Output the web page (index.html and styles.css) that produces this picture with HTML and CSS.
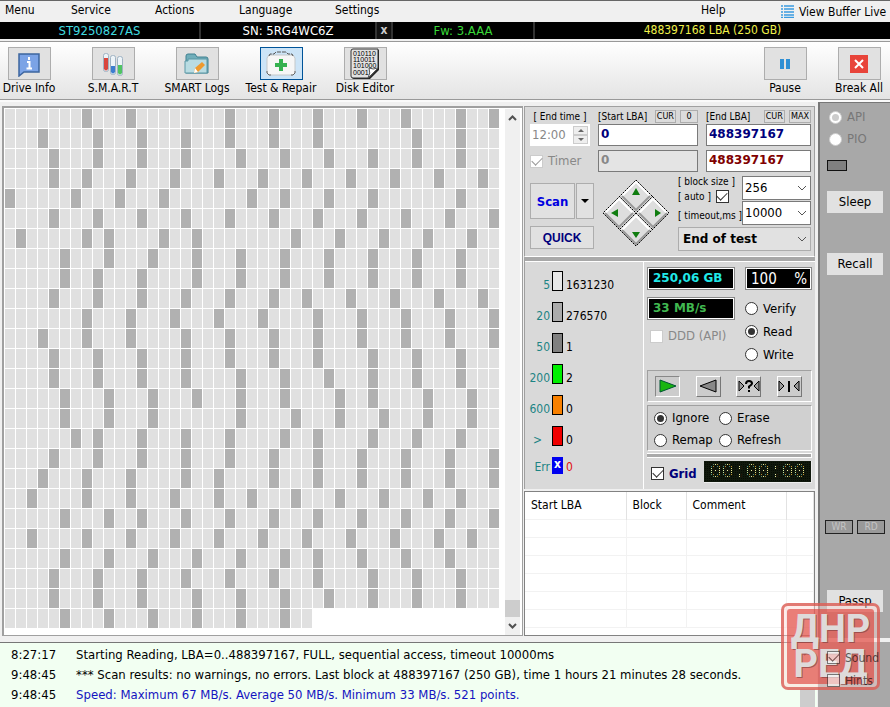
FILE: index.html
```html
<!DOCTYPE html>
<html lang="en">
<head>
<meta charset="utf-8">
<title>Drive test</title>
<link rel="stylesheet" href="styles.css">
</head>
<body>
<nav class="menubar">
  <a href="#">Menu</a><a href="#">Service</a><a href="#">Actions</a><a href="#">Language</a><a href="#">Settings</a><a href="#">Help</a>
  <a href="#" class="buffer"><svg width="13" height="13" viewBox="0 0 13 13"><path d="M0 1h2M3 1h10M0 4h2M3 4h10M0 7h2M3 7h10M0 10h2M3 10h10M0 12.5h2M3 12.5h10" stroke="#3a9be0" stroke-width="1.4"/></svg>View Buffer Live</a>
</nav>
<div class="info">
  <span class="model">ST9250827AS</span>
  <span class="serial">SN: 5RG4WC6Z</span>
  <button class="forget">x</button>
  <span class="firmware">Fw: 3.AAA</span>
  <span class="capacity">488397168 LBA (250 GB)</span>
</div>
<div class="toolbar">
  <div class="tools">
    <button class="tool"><span class="tile"><svg width="24" height="26" viewBox="0 0 24 26"><path d="M2 3h20v18H7l-5 4z" fill="#7ba3e6" stroke="#3d659f" stroke-width="1.5"/><path d="M12 6v3M10 11h2.500v6M9.500 17.500h5.500" stroke="#fff" stroke-width="2" fill="none"/></svg></span>Drive Info</button>
    <button class="tool"><span class="tile"><svg width="24" height="26" viewBox="0 0 24 26"><g stroke="#9fb3c4" fill="#eef4f8"><rect x="2.500" y="2.500" width="5" height="18" rx="2"/><rect x="9.500" y="4.500" width="5" height="19" rx="2"/><rect x="16.500" y="5.500" width="5" height="19" rx="2"/></g><path d="M3 7h4v11q-2 3-4 0z" fill="#d9463d"/><path d="M10 15h4v6q-2 3-4 0z" fill="#3d7dd0"/><path d="M17 14h4v8q-2 3-4 0z" fill="#50c463"/></svg></span>S.M.A.R.T</button>
    <button class="tool"><span class="tile"><svg width="26" height="26" viewBox="0 0 26 26"><path d="M2 22V5q0-2 2-2h7l2 3h9q2 0 2 2v14z" fill="#70aeba" stroke="#3f8090"/><path d="M4 8h19v14H1V10h3z" fill="#b9dce2" stroke="#5b97a5"/><path d="M10 22l1-5 7-6 3 3-7 7z" fill="#ef9a2d"/><path d="M10 22l1-5 3 4z" fill="#fff"/></svg></span>SMART Logs</button>
    <button class="tool active"><span class="tile"><svg width="32" height="28" viewBox="0 0 32 28"><path d="M4 5h24l2 3v15l-2 2H4l-2-2V8z" fill="#f6f6f6" stroke="#c4c8ca"/><path d="M4 6l1-2h4l2-2h10l2 2h4l1 2" fill="none" stroke="#555" stroke-dasharray="4 1"/><path d="M2 21v2l2 2h2M30 21v2l-2 2h-2" fill="none" stroke="#666"/><path d="M14 9h4v4h4v4h-4v4h-4v-4h-4v-4h4z" fill="#35b150"/></svg></span>Test &amp; Repair</button>
    <button class="tool"><span class="tile"><svg width="30" height="32" viewBox="0 0 30 32"><path d="M4 2h25v20l-9 9H4q-2 0-2-2V4q0-2 2-2z" fill="#222"/><path d="M3 1h25v19l-9 10H3q-2 0-2-2V3q0-2 2-2z" fill="#e2e2e2" stroke="#333"/><path d="M18 30q3-5 1-10 4 2 9 0z" fill="#fff" stroke="#555"/><g class="bits"><text x="3" y="8">010110</text><text x="3" y="14">110011</text><text x="3" y="20">101000</text><text x="3" y="27">0001</text></g></svg></span>Disk Editor</button>
  </div>
  <div class="tools right">
    <button class="tool"><span class="tile"><svg width="12" height="12" viewBox="0 0 12 12"><path d="M1 1h4v10H1zM7 1h4v10H7z" fill="#2e8fd4"/></svg></span>Pause</button>
    <button class="tool"><span class="tile"><svg width="18" height="18" viewBox="0 0 18 18"><path fill="#e8443a" d="M0 0h18v18H0z"/><path d="M5 5l8 8M13 5l-8 8" stroke="#fff" stroke-width="2"/></svg></span>Break All</button>
  </div>
</div>

<main class="work">
  <section class="map">
    <div class="cells" id="cells"></div>
    <div class="scroll"><svg width="9" height="6" viewBox="0 0 9 6"><path d="M1 5l3.500-3.500L8 5" fill="none" stroke="#505050" stroke-width="2"/></svg><span class="thumb"></span><svg width="9" height="6" viewBox="0 0 9 6"><path d="M1 1l3.500 3.500L8 1" fill="none" stroke="#505050" stroke-width="2"/></svg></div>
  </section>

  <section class="right-pane">
    <div class="setup">
      <div class="ranges">
        <div class="caption"><label class="end-time" for="time">[ End time ]</label></div>
        <div class="caption"><label for="start">[Start LBA]</label><button class="mini">CUR</button><button class="mini">0</button></div>
        <div class="caption"><label for="end">[End LBA]</label><button class="mini">CUR</button><button class="mini">MAX</button></div>
        <div class="time"><input id="time" value="12:00" disabled><span class="spin"><button aria-label="Later"><i class="up"></i></button><button aria-label="Earlier"><i class="down"></i></button></span></div>
        <input class="lba" id="start" value="0">
        <input class="lba" id="end" value="488397167">
        <label class="choice off"><input type="checkbox" checked disabled>Timer</label>
        <input class="lba" value="0" aria-label="Current start" disabled>
        <input class="lba red" value="488397167" aria-label="Current end">
      </div>
      <div class="actions">
        <div class="start-buttons">
          <button class="scan">Scan</button><button class="scan-menu" aria-label="Scan options"><i class="down"></i></button>
          <button class="quick">QUICK</button>
        </div>
        <svg class="compass" width="68" height="68" viewBox="0 0 68 68">
          <path d="M34 1l33 33-33 33L1 34z" fill="#dedede"/>
          <path d="M20 17L34 3l14 14M3 34l14-14 14 14M37 34l14-14 14 14M20 51l14-14 14 14" fill="none" stroke="#fff" stroke-width="2"/>
          <path d="M20 17l14 14 14-14M3 34l14 14 14-14M37 34l14 14 14-14M20 51l14 14 14-14" fill="none" stroke="#999" stroke-width="2"/>
          <path d="M34 1l33 33-33 33L1 34zM17 17l34 34M51 17L17 51" fill="none" stroke="#000" stroke-dasharray="2 1"/>
          <path d="M34 9l4 7h-8zM34 59l4-6h-8zM9 34l7-4v8zM59 34l-6-4v8z" fill="#107d10"/>
        </svg>
        <div class="options">
          <div class="option-labels">
            <label for="block">[ block size ]</label>
            <label class="auto">[ auto ]<input type="checkbox" checked></label>
            <label for="timeout">[ timeout,ms ]</label>
          </div>
          <div class="option-values">
            <span class="pick"><select id="block"><option>256</option></select><svg width="10" height="6" viewBox="0 0 10 6"><path d="M1 1l4 4 4-4" fill="none" stroke="#555"/></svg></span>
            <span class="pick"><select id="timeout"><option>10000</option></select><svg width="10" height="6" viewBox="0 0 10 6"><path d="M1 1l4 4 4-4" fill="none" stroke="#555"/></svg></span>
          </div>
          <span class="pick finish"><select aria-label="On finish"><option>End of test</option></select><svg width="10" height="6" viewBox="0 0 10 6"><path d="M1 1l4 4 4-4" fill="none" stroke="#555"/></svg></span>
        </div>
      </div>
    </div>

    <div class="stats">
      <div class="legend">
        <span class="ms">5</span><i class="bar b5"></i><span>1631230</span>
        <span class="ms">20</span><i class="bar b20"></i><span>276570</span>
        <span class="ms">50</span><i class="bar b50"></i><span>1</span>
        <span class="ms">200</span><i class="bar b200"></i><span>2</span>
        <span class="ms">600</span><i class="bar b600"></i><span>0</span>
        <span class="ms gt">&gt;</span><i class="bar bmax"></i><span>0</span>
        <span class="ms">Err</span><i class="err">x</i><span class="bad">0</span>
      </div>
      <div class="control">
        <div class="readouts">
          <div class="col">
            <output class="screen cyan">250,06 GB</output>
            <output class="screen green">33 MB/s</output>
            <label class="choice off ddd"><input type="checkbox" disabled>DDD (API)</label>
          </div>
          <div class="col modes">
            <output class="screen percent"><span>100</span><span>%</span></output>
            <label class="choice"><input type="radio" name="mode">Verify</label>
            <label class="choice"><input type="radio" name="mode" checked>Read</label>
            <label class="choice"><input type="radio" name="mode">Write</label>
          </div>
        </div>
        <div class="group playback">
          <button class="pressed" aria-label="Forward"><svg width="20" height="16" viewBox="0 0 20 16"><path d="M2 2l16 6-16 6z" fill="#18b510" stroke="#053"/></svg></button>
          <button aria-label="Backward"><svg width="20" height="16" viewBox="0 0 20 16"><path d="M18 2L2 8l16 6z" fill="#888" stroke="#000"/></svg></button>
          <button aria-label="Random"><svg width="24" height="16" viewBox="0 0 24 16"><path d="M2 3l5 5-5 5zM22 3l-5 5 5 5z" fill="#999" stroke="#000"/><path d="M9 6q0-3 3-3t3 2.500q0 1-3 3v2M12 12v2" fill="none" stroke="#000" stroke-width="2"/></svg></button>
          <button aria-label="Butterfly"><svg width="24" height="16" viewBox="0 0 24 16"><path d="M2 3l5 5-5 5zM22 3l-5 5 5 5z" fill="#999" stroke="#000"/><path d="M12 3v11" stroke="#000" stroke-width="2"/></svg></button>
        </div>
        <div class="group policy">
          <label class="choice"><input type="radio" name="policy" checked>Ignore</label>
          <label class="choice"><input type="radio" name="policy">Erase</label>
          <label class="choice"><input type="radio" name="policy">Remap</label>
          <label class="choice"><input type="radio" name="policy">Refresh</label>
        </div>
        <div class="divider"></div>
        <div class="grid-row">
          <label class="choice grid-toggle"><input type="checkbox" checked>Grid</label>
          <output class="clock">00:00:00</output>
        </div>
      </div>
    </div>

    <div class="defects">
      <table>
        <thead><tr><th class="c1">Start LBA</th><th class="c2">Block</th><th class="c3">Comment</th><th></th></tr></thead>
        <tbody>
          <tr><td></td><td></td><td></td><td></td></tr><tr><td></td><td></td><td></td><td></td></tr>
          <tr><td></td><td></td><td></td><td></td></tr><tr><td></td><td></td><td></td><td></td></tr>
          <tr><td></td><td></td><td></td><td></td></tr><tr><td></td><td></td><td></td><td></td></tr>
        </tbody>
      </table>
    </div>
  </section>

  <aside class="side">
    <label class="choice off"><input type="radio" name="bus" checked disabled>API</label>
    <label class="choice off"><input type="radio" name="bus" disabled>PIO</label>
    <span class="led"></span>
    <button class="sleep">Sleep</button>
    <button class="recall">Recall</button>
    <div class="lamps"><span>WR</span><span>RD</span></div>
    <button class="passp">Passp</button>
  </aside>
</main>

<footer class="bottom">
  <div class="log">
    <table>
      <tr><td>8:27:17</td><td>Starting Reading, LBA=0..488397167, FULL, sequential access, timeout 10000ms</td></tr>
      <tr><td>9:48:45</td><td>*** Scan results: no warnings, no errors. Last block at 488397167 (250 GB), time 1 hours 21 minutes 28 seconds.</td></tr>
      <tr class="speed"><td>9:48:45</td><td>Speed: Maximum 67 MB/s. Average 50 MB/s. Minimum 33 MB/s. 521 points.</td></tr>
    </table>
    <div class="log-scroll"><svg width="9" height="6" viewBox="0 0 9 6"><path d="M1 5l3.500-3.500L8 5" fill="none" stroke="#555" stroke-width="2"/></svg><span></span></div>
  </div>
  <div class="switches">
    <label class="choice"><input type="checkbox" checked>Sound</label>
    <label class="choice"><input type="checkbox">Hints</label>
  </div>
</footer>
<div class="stamp"><div><span>ДНР</span><span>РЕД</span></div></div>
<script src="map.js"></script>
</body>
</html>
```
FILE: styles.css
```css
* { box-sizing: border-box; }
body {
  margin: 0;
  min-height: 100vh;
  display: flex;
  flex-direction: column;
  position: relative;
  background: #f0f0f0;
  color: #000;
  font: 12px/16px "DejaVu Sans Condensed", "DejaVu Sans", sans-serif;
}
button, input, select { font: inherit; color: inherit; margin: 0; padding: 0; border-radius: 0; }
button { border: 1px solid #adadad; background: #e1e1e1; text-align: center; }
a { color: inherit; text-decoration: none; }
svg { display: block; flex: none; }

.menubar {
  display: grid;
  grid-template-columns: 66px 84px 84px 96px 1fr 80px 109px;
  height: 22px;
  padding-left: 5px;
  border-top: 1px solid #666;
  line-height: 18px;
}
.buffer { display: flex; gap: 5px; align-items: center; white-space: nowrap; }

.info {
  display: grid;
  grid-template-columns: 201px 176px 16px 142px 1fr;
  height: 17px;
  background: #000;
  font-size: 12px;
  line-height: 17px;
  text-align: center;
}
.info span { border-right: 2px solid #333; }
.info .capacity { border: 0; color: #f0f04a; }
.info .serial { color: #fff; }
.info .model { color: #40dce0; }
.firmware { color: #38d838; }
.info .model, .info .serial, .firmware { font-size: 13px; }
.forget { background: #111; border: 0; border-right: 2px solid #333; color: #ccc; font-weight: bold; line-height: 15px; }

.toolbar {
  display: flex;
  justify-content: space-between;
  height: 59px;
  margin-top: 2px;
  padding-top: 5px;
  border-top: 1px solid #999;
  border-bottom: 1px solid #999;
  background: linear-gradient(#fff, #e4e4e4);
  overflow: hidden;
}
.tools { display: grid; grid-auto-flow: column; grid-auto-columns: 84px; margin-left: -13px; align-items: start; }
.tools.right { grid-auto-columns: 74px; margin-right: -6px; }
.tool { display: flex; flex-direction: column; align-items: center; border: 0; background: none; white-space: nowrap; }
.tile { display: flex; align-items: center; justify-content: center; width: 43px; height: 33px; border: 1px solid #adadad; background: #e1e1e1; }
.active .tile { background: #cce4f7; border-color: #005499; }
.bits { font: 7px "Liberation Sans", sans-serif; }

.work { flex: 1; display: flex; border-top: 2px solid #fafafa; }
.map {
  flex: 1;
  display: flex;
  justify-content: space-between;
  margin: 4px 0 2px 2px;
  padding: 1px 2px 0 1px;
  background: #fff;
  border: 2px solid #a0a0a0;
  border-width: 2px 1px 1px 2px;
}
.cells { display: grid; grid-template-columns: repeat(45, 10px); grid-auto-rows: 19px; gap: 1px; align-content: start; }
.cells i { background: #e0e0e0; }
.cells .slow { background: #b1b1b1; }
.scroll { width: 15px; background: #f0f0f0; display: flex; flex-direction: column; align-items: center; padding: 6px 0; }
.thumb { width: 15px; height: 17px; background: #cdcdcd; margin: auto 0 6px; }

.right-pane { width: 291px; margin: 4px 3px 2px 1px; display: flex; flex-direction: column; }
.setup { height: 151px; padding: 3px 3px 0 5px; background: #d9d9d9; border: 1px solid #a0a0a0; border-bottom-color: #fff; }
.ranges { display: grid; grid-template-columns: 60px 100px 1fr; grid-template-rows: 14px 22px 26px; gap: 0 8px; }
.caption { display: flex; gap: 4px; font-size: 10px; line-height: 14px; white-space: nowrap; }
.caption label { flex: 1; }
.end-time { text-align: center; }
.mini { height: 13px; min-width: 18px; padding: 0 1px; font-size: 9px; line-height: 11px; background: #dcdcdc; }
.ranges > :nth-child(n+7) { margin-top: 4px; height: 22px; }
.lba {
  width: 100%;
  height: 22px;
  border: 1px solid #7a7a7a;
  padding: 0 2px 2px;
  background: #fff;
  color: #00007c;
  font: bold 12px "DejaVu Sans", sans-serif;
}
.lba.red { color: #800000; }
.lba:disabled { background: #e4e4e4; color: #888; border-color: #7a7a7a; }
.time { display: flex; height: 22px; background: #fff; padding: 2px; }
.time input { flex: 1; min-width: 0; border: 0; background: none; color: #888; font-size: 13px; }
.spin { display: grid; width: 15px; }
.spin button { display: flex; align-items: center; justify-content: center; background: #eee; border-color: #ccc; }
.up, .down { border: 3px solid transparent; }
.up { border-top: 0; border-bottom-color: #666; }
.down { border-bottom: 0; border-top-color: #666; }

.actions { display: grid; grid-template-columns: 64px 68px 1fr; gap: 8px; margin-top: 4px; }
.start-buttons { display: grid; grid-template-columns: 45px 1fr; grid-template-rows: 36px 23px; gap: 7px 1px; padding-top: 7px; align-content: start; }
.compass { margin-top: 3px; }
.scan { color: #0000e0; font: bold 13px "DejaVu Sans Condensed", sans-serif; }
.scan-menu { display: flex; align-items: center; justify-content: center; }
.scan-menu .down { border-width: 4px 4px 0; border-top-color: #000; }
.quick { grid-column: span 2; color: #00007c; font: bold 12px "Liberation Sans", sans-serif; }
.options { display: grid; grid-template-columns: 64px 1fr; grid-template-rows: 49px 24px; gap: 2px 0; align-content: start; }
.option-labels { display: flex; flex-direction: column; font-size: 10px; line-height: 11px; white-space: nowrap; gap: 2px; }
.auto { display: flex; gap: 5px; align-items: center; height: 15px; margin-bottom: 4px; }
.option-values { display: grid; grid-template-rows: 24px 24px; gap: 1px; }
.pick { position: relative; display: flex; align-items: center; }
.pick select { appearance: none; width: 100%; height: 100%; border: 1px solid #7a7a7a; background: #fff; padding: 0 2px; font-size: 13px; }
.pick svg { position: absolute; right: 4px; }
.finish { grid-column: span 2; }
.finish select { background: #e1e1e1; border-color: #adadad; padding-left: 4px; font: bold 12px "DejaVu Sans", sans-serif; }

.choice { display: flex; align-items: center; gap: 5px; font-size: 13px; white-space: nowrap; }
.off { color: #888; }
input[type=checkbox], input[type=radio] {
  appearance: none;
  flex: none;
  display: grid;
  place-items: center;
  width: 13px;
  height: 13px;
  border: 1px solid #333;
  background: #fff;
}
input[type=radio] { border-radius: 50%; }
input[type]:disabled { border-color: #ccc; }
input[type=checkbox]:checked::before { content: ""; width: 9px; height: 5px; margin-top: -3px; border: solid #333; border-width: 0 0 1px 1px; transform: rotate(-45deg); }
input[type=radio]:checked::before { content: ""; width: 7px; height: 7px; border-radius: 50%; background: #333; }
input[type=checkbox]:disabled:checked::before { border-color: #999; }
input[type=radio]:disabled:checked::before { background: #ccc; }

.stats { display: flex; height: 232px; border-top: 4px solid #a8a8a8; background: #d9d9d9; border-left: 1px solid #a0a0a0; margin-bottom: 2px; }
.legend {
  display: grid;
  grid-template-columns: 25px 10px 1fr;
  grid-auto-rows: 20px;
  gap: 11px 3px;
  align-content: start;
  width: 119px;
  padding-top: 9px;
  border-top: 1px solid #fff;
  border-right: 1px solid #fff;
}
.legend span { padding-top: 6px; line-height: 17px; }
.ms { color: #1c8484; text-align: right; }
.gt { padding-right: 8px; }
.bar { border: 1px solid #000; margin-left: -1px; }
.b5 { background: #e8e8e8; }
.b20 { background: #ababab; }
.b50 { background: #808080; }
.b200 { background: #00f000; }
.b600 { background: #f88000; }
.bmax { background: #f00000; }
.err { height: 17px; margin-left: -1px; background: #0000f0; color: #fff; font-weight: bold; font-style: normal; line-height: 15px; text-align: center; }
.legend .ms:nth-last-child(3), .legend .bad { padding-top: 2px; }
.bad { color: #e01010; }

.control { flex: 1; padding: 5px 3px 0 3px; border-top: 1px solid #fff; display: flex; flex-direction: column; }
.readouts { display: grid; grid-template-columns: 88px 1fr; gap: 10px; height: 103px; }
.col { display: flex; flex-direction: column; }
.col .screen + .screen { margin-top: 7px; }
.screen { display: block; height: 23px; padding-left: 5px; border: 1px solid #888; outline: 1px solid #fff; outline-offset: -2px; background: #000; font: bold 12px/20px "DejaVu Sans", sans-serif; }
.cyan { color: #20e8e8; }
.green { color: #40b850; }
.percent { display: flex; justify-content: space-between; padding-right: 4px; margin-bottom: 7px; color: #fff; font: 15px/23px "DejaVu Sans Condensed", sans-serif; }
.modes .choice { height: 23px; }
.ddd { margin: 8px 0 0 3px; }
.group { border: 1px solid #a0a0a0; border-right-color: #fff; border-bottom-color: #fff; background: #d0d0d0; }
.playback { display: flex; align-items: center; justify-content: space-between; height: 32px; padding: 0 9px 0 7px; margin-bottom: 3px; }
.playback button { display: flex; align-items: center; justify-content: center; width: 25px; height: 21px; background: #ccc; border: 1px solid #fff; border-right-color: #777; border-bottom-color: #777; }
.playback .pressed { border-color: #888 #fff #fff #888; }
.policy { display: grid; grid-template-columns: 65px 1fr; grid-auto-rows: 22px; height: 46px; padding: 1px 0 0 6px; }
.divider { height: 5px; margin-top: 2px; background: #aaa; border: 1px solid #fff; border-left: 0; }
.grid-row { display: flex; justify-content: space-between; margin-top: 3px; }
.grid-toggle { padding-left: 4px; padding-top: 3px; color: #00007c; font-weight: bold; }
.clock {
  width: 108px;
  height: 22px;
  color: #e8e8a0;
  text-align: center;
  font: 20px/22px "Liberation Mono", monospace;
  background: #060c04;
  border: 1px solid #eee;
  border-width: 0 1px 1px 0;
  position: relative;
}
.clock::after { content: ""; position: absolute; inset: 0; background: repeating-linear-gradient(90deg, #10180c 0 1px, transparent 1px 2px), repeating-linear-gradient(#10180c 0 1px, transparent 1px 2px); }

.defects { flex: 1; border: 1px solid #828282; background: #fff; overflow: hidden; }
.defects table { width: 100%; border-collapse: collapse; table-layout: fixed; }
.defects th { height: 27px; padding: 0 0 0 6px; border-right: 1px solid #e2e2e2; text-align: left; font-weight: normal; }
.defects td { height: 18px; padding: 0; border: solid #f2f2f2; border-width: 1px 1px 1px 0; }
.c1 { width: 101px; }
.c2 { width: 60px; }
.c3 { width: 100px; }

.side { width: 72px; display: flex; flex-direction: column; padding: 3px 7px 0 7px; background: #a8a8a8; border-left: 2px solid #777; border-top: 1px solid #777; }
.side .choice { height: 22px; padding-left: 2px; color: #777; }
.side button { height: 22px; background: #e1e1e1; border: 0; width: 56px; font-size: 13px; }
.led { width: 20px; height: 11px; margin: 10px 0 20px; border: 1px solid #111; background: #808080; }
.side .recall { margin-top: 40px; }
.lamps { display: flex; gap: 4px; margin: auto -2px 56px; }
.lamps span { width: 28px; height: 14px; border: 1px solid #222; background: #999; color: #c4c4c4; font-size: 10px; line-height: 12px; text-align: center; }
.side .passp { margin-bottom: 26px; }

.bottom { display: flex; height: 69px; border-top: 4px solid #f0f0f0; }
.log { flex: 1; display: flex; justify-content: space-between; padding-right: 2px; margin-right: 1px; border-top: 1px solid #777; background: #f2fff2; }
.log table { border-collapse: collapse; margin-top: 2px; align-self: start; }
.log td { height: 20px; padding: 0 0 0 11px; font-size: 13px; line-height: 20px; white-space: nowrap; }
.log td + td { padding-left: 20px; }
.speed td + td { color: #1414c0; }
.log-scroll { width: 16px; background: #f2fff2; display: flex; flex-direction: column; justify-content: space-between; align-items: center; padding-top: 7px; }
.log-scroll span { width: 15px; height: 18px; background: #cdcdcd; }
.switches { width: 72px; padding: 4px 0 0 9px; background: #a8a8a8; }
.switches .choice { position: relative; z-index: 2; height: 23px; font-size: 12px; opacity: .6; }

.stamp {
  position: absolute;
  z-index: 1;
  right: 10px;
  bottom: 17px;
  width: 99px;
  height: 87px;
  padding: 3px;
  border: 3px solid rgba(214, 72, 64, .7);
  border-radius: 7px;
  background: rgba(255, 215, 210, .45);
  pointer-events: none;
}
.stamp div { display: grid; align-content: center; justify-items: center; height: 100%; background: rgba(222, 66, 58, .65); border-radius: 3px; color: #dedada; }
.stamp span { font: bold 38px/35px Roboto, sans-serif; text-shadow: 1px 1px 0 rgba(120, 60, 60, .6); }
```
FILE: map.js
```js
// Indexes of the slower blocks in every row of the surface map.
const slow = [
  [7,11,20,24,28,32,36,41,44],
  [3,8,12,16,20,24,28,37,41],
  [4,8,12,16,21,25,29,33,37,41],
  [4,7,11,15,19,23,27,31,35,39,43],
  [0,6,10,14,22,25,29,33,41],
  [4,8,12,16,20,24,28,32,36,40,44],
  [1,7,9,14,17,26,30,34,38,42],
  [5,9,13,17,21,25,29,33,37,41],
  [5,8,12,17,21,25,29,33,37,41],
  [4,8,12,16,20,24,27,31,35,39,43],
  [7,11,15,19,23,28,32,36,40,44],
  [3,7,11,16,20,24,28,32,36,40,44],
  [4,8,12,16,20,24,28,33,37,41],
  [4,8,12,16,21,25,29,33,37,41],
  [5,9,13,17,21,25,30,33,38,42],
  [5,9,13,21,26,30,34,38,42],
  [6,8,12,16,20,25,28,33,37,41],
  [4,8,12,16,20,24,28,32,36,40,44],
  [3,7,11,16,19,24,28,32,36,40,44],
  [2,7,11,15,19,22,26,30,34,38,41],
  [5,9,12,16,20,24,28,32,36,40,44],
  [2,7,11,15,19,23,27,31,35,39,42],
  [5,9,13,17,21,25,28,32,36,40],
  [4,8,12,16,20,24,28,33,37,41],
  [4,8,12,17,21,25,29,33,37,41],
  [5,9,13,17,21,25]
];
const cells = document.getElementById("cells");
slow.forEach((row, r) => {
  const count = r === slow.length - 1 ? 28 : 45;
  for (let c = 0; c < count; c++) {
    const cell = document.createElement("i");
    if (row.includes(c)) cell.className = "slow";
    cells.append(cell);
  }
});
```
